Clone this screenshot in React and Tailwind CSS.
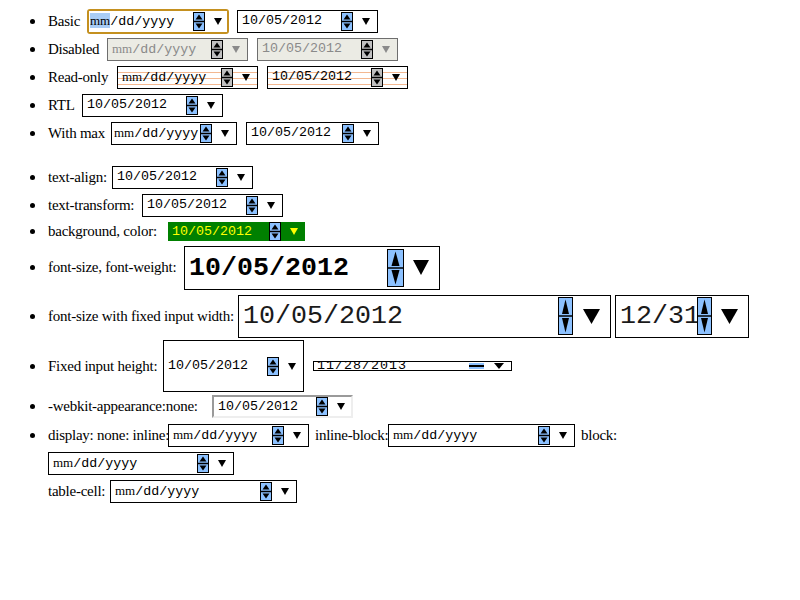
import React from 'react';

// spin button: up/down arrows in a small box
const Spin = ({ w = 12, h = 19, color = '#8cc1ff', flat = false, inset = 2.5 }) => {
  if (flat) {
    return (
      <svg width={w} height={h} viewBox={`0 0 ${w} ${h}`} className="shrink-0">
        <rect x="0" y="0" width={w} height={h} fill={color} />
        <rect x="0" y={h / 2 - 1} width={w} height="2" fill="#000" />
      </svg>
    );
  }
  const mid = h / 2;
  return (
    <svg width={w} height={h} viewBox={`0 0 ${w} ${h}`} className="shrink-0">
      <rect x="0.5" y="0.5" width={w - 1} height={h - 1} fill={color} stroke="#000" />
      <line x1="0" y1={mid} x2={w} y2={mid} stroke="#000" strokeWidth="1.5" />
      <polygon points={`${w / 2},2.5 ${w - inset},${mid - 2} ${inset},${mid - 2}`} fill="#000" />
      <polygon points={`${inset},${mid + 2} ${w - inset},${mid + 2} ${w / 2},${h - 2.5}`} fill="#000" />
    </svg>
  );
};

const Arrow = ({ w = 8, h = 7, color = '#000' }) => (
  <svg width={w} height={h} viewBox={`0 0 ${w} ${h}`} className="shrink-0">
    <polygon points={`0,0 ${w},0 ${w / 2},${h}`} fill={color} />
  </svg>
);

const Placeholder = ({ gray, focused }) => (
  <span className={`whitespace-nowrap ${gray ? 'text-[#8a8a8a]' : 'text-black'}`}>
    <span className={`font-['Liberation_Serif',serif] text-[13px] ${focused ? 'bg-[#a9cdf5]' : ''}`}>mm</span>
    <span className="font-['Liberation_Mono',monospace] text-[13.33px]">/dd/yyyy</span>
  </span>
);

const DateInput = ({
  value,
  w = 'w-[141px]',
  box = 'border border-black bg-white',
  text = 'text-black',
  spin,
  arrow,
  gap = 'ml-[9px]',
  pr = 'pr-[7px]',
  pl = 'pl-[4px]',
  h = 'h-[23px]',
  size = 'text-[13.33px]',
}) => (
  <div className={`flex items-center shrink-0 overflow-hidden ${pl} ${w} ${h} ${box} ${pr}`}>
    <div className={`flex-1 min-w-0 overflow-hidden whitespace-nowrap font-['Liberation_Mono',monospace] ${size} ${text}`}>
      {value}
    </div>
    {spin || <Spin />}
    <div className={gap}>{arrow || <Arrow />}</div>
  </div>
);

const Row = ({ h, children }) => (
  <li className={`flex items-center ${h} pl-[30px]`}>
    <span className="w-[5px] h-[5px] rounded-full shrink-0 bg-black" />
    <div className="flex items-center ml-[13px] whitespace-nowrap">{children}</div>
  </li>
);

// label with a fixed advance so the inputs land where the reference has them
const Label = ({ w, children }) => (
  <span className={`${w} shrink-0 tracking-[-0.25px] whitespace-nowrap`}>{children}</span>
);

const stripes =
  'bg-[repeating-linear-gradient(to_bottom,transparent_0px,transparent_5px,#f3b891_5px,#f3b891_6px)]';

export default function App() {
  return (
    <div className="w-[800px] h-[600px] bg-white font-['Liberation_Serif',serif] text-[15px] text-black pt-[7px]">
      <ul className="list-none">
        <Row h="h-[28px]">
          <Label w="w-[39px]">Basic</Label>
          <div className="rounded-[3px] border-2 border-[#c4901f]">
            <DateInput value={<Placeholder focused />} box="bg-white" w="w-[138px]" h="h-[21px]" pr="pr-[5px]" pl="pl-[1px]" />
          </div>
          <div className="ml-[8px]">
            <DateInput value="10/05/2012" />
          </div>
        </Row>
        <Row h="h-[28px]">
          <Label w="w-[59px]">Disabled</Label>
          <DateInput
            value={<Placeholder gray />}
            box="border border-[#6e6e6e] bg-[#ebebe4]"
            spin={<Spin color="#c0c0c0" />}
            arrow={<Arrow color="#8a8a8a" />}
          />
          <div className="ml-[9px]">
            <DateInput
              value="10/05/2012"
              text="text-[#8a8a8a]"
              box="border border-[#6e6e6e] bg-[#ebebe4]"
              spin={<Spin color="#c0c0c0" />}
              arrow={<Arrow color="#8a8a8a" />}
            />
          </div>
        </Row>
        <Row h="h-[28px]">
          <Label w="w-[69px]">Read-only</Label>
          <DateInput value={<Placeholder />} box={`border border-black bg-white ${stripes}`} spin={<Spin color="#c0c0c0" />} />
          <div className="ml-[9px]">
            <DateInput value="10/05/2012" box={`border border-black bg-white ${stripes}`} spin={<Spin color="#c0c0c0" />} />
          </div>
        </Row>
        <Row h="h-[28px]">
          <Label w="w-[34px]">RTL</Label>
          <DateInput value="10/05/2012" />
        </Row>
        <Row h="h-[28px]">
          <Label w="w-[63px]">With max</Label>
          <DateInput value={<Placeholder />} w="w-[126px]" pl="pl-[2px]" />
          <div className="ml-[9px]">
            <DateInput value="10/05/2012" w="w-[133px]" />
          </div>
        </Row>
      </ul>

      <ul className="list-none mt-[16px]">
        <Row h="h-[28px]">
          <Label w="w-[64px]">text-align:</Label>
          <DateInput value="10/05/2012" />
        </Row>
        <Row h="h-[28px]">
          <Label w="w-[94px]">text-transform:</Label>
          <DateInput value="10/05/2012" />
        </Row>
        <Row h="h-[25px]">
          <Label w="w-[120px]">background, color:</Label>
          <DateInput
            value="10/05/2012"
            w="w-[137px]"
            h="h-[19px]"
            box="bg-[#008000]"
            text="text-[#ffff00]"
            arrow={<Arrow color="#ffff00" />}
          />
        </Row>
        <Row h="h-[47px]">
          <Label w="w-[136px]">font-size, font-weight:</Label>
          <DateInput
            value={<span className="font-bold">10/05/2012</span>}
            w="w-[256px]"
            h="h-[44px]"
            size="text-[26.67px]"
            spin={<Spin w={17} h={38} inset={4.5} />}
            arrow={<Arrow w={16} h={15} />}
            gap="ml-[9px]"
            pr="pr-[10px]"
          />
        </Row>
        <Row h="h-[50px]">
          <Label w="w-[190px]">font-size with fixed input width:</Label>
          <DateInput
            value="10/05/2012"
            w="w-[373px]"
            h="h-[43px]"
            size="text-[26.67px]"
            text="text-[#1a1a1a]"
            spin={<Spin w={15} h={38} inset={4} />}
            arrow={<Arrow w={17} h={15} />}
            gap="ml-[10px]"
            pr="pr-[10px]"
          />
          <div className="ml-[4px]">
            <DateInput
              value="12/31"
              w="w-[134px]"
              h="h-[43px]"
              size="text-[26.67px]"
              text="text-[#1a1a1a]"
              spin={<Spin w={15} h={38} inset={4} />}
              arrow={<Arrow w={17} h={15} />}
              gap="ml-[9px]"
              pr="pr-[10px]"
            />
          </div>
        </Row>
        <Row h="h-[50px]">
          <Label w="w-[115px]">Fixed input height:</Label>
          <DateInput value="10/05/2012" h="h-[52px]" />
          <div className="ml-[9px] flex items-center">
            <div className="flex items-center w-[199px] h-[10px] border border-black bg-white overflow-hidden pl-[3px] pr-[7px]">
              <div className="flex-1 overflow-hidden whitespace-nowrap font-['Liberation_Mono',monospace] text-[13.33px] leading-[8px] tracking-[1px]">
                11/28/2013
              </div>
              <Spin flat w={15} h={6} />
              <div className="ml-[10px]">
                <Arrow w={10} h={6} />
              </div>
            </div>
          </div>
        </Row>
        <Row h="h-[31px]">
          <Label w="w-[164px]">-webkit-appearance:none:</Label>
          <DateInput
            value="10/05/2012"
            box="border-2 border-t-[#9a9a9a] border-l-[#9a9a9a] border-b-[#eeeeee] border-r-[#eeeeee] bg-white"
            pr="pr-[6px]"
          />
        </Row>
        <li className="pl-[30px]">
          <div className="flex items-center h-[26px]">
            <span className="w-[5px] h-[5px] rounded-full bg-black shrink-0" />
            <div className="flex items-center ml-[13px] whitespace-nowrap">
              <Label w="w-[120px]">display: none: inline:</Label>
              <DateInput value={<Placeholder />} />
              <Label w="w-[73px] ml-[6px]">inline-block:</Label>
              <DateInput value={<Placeholder />} w="w-[187px]" />
              <Label w="w-[40px] ml-[6px]">block:</Label>
            </div>
          </div>
          <div className="flex items-center h-[31px] pl-[18px]">
            <DateInput value={<Placeholder />} w="w-[186px]" />
          </div>
          <div className="flex items-center h-[24px] pl-[18px]">
            <Label w="w-[62px]">table-cell:</Label>
            <DateInput value={<Placeholder />} w="w-[187px]" />
          </div>
        </li>
      </ul>
    </div>
  );
}
